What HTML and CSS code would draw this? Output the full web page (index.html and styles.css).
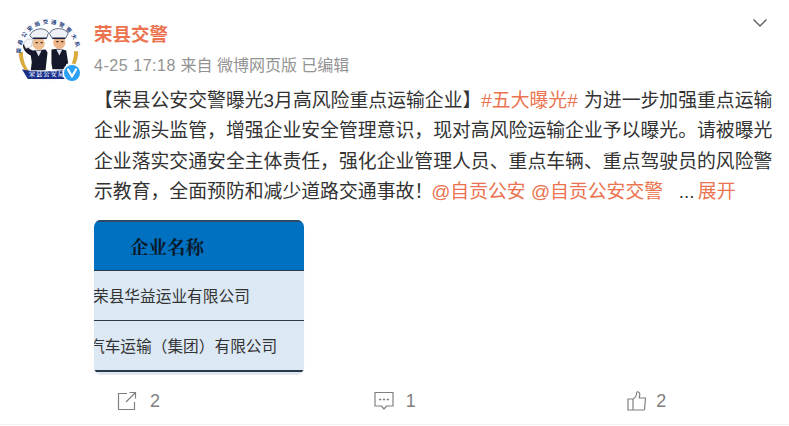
FILE: index.html
```html
<!DOCTYPE html>
<html lang="zh">
<head>
<meta charset="utf-8">
<title>荣县交警</title>
<link rel="stylesheet" href="styles.css">
</head>
<body>
<article class="card">
  <header class="head">
    <div class="avatar">
      <svg class="avatar-art" viewBox="0 0 66 66" aria-hidden="true">
        <circle cx="33" cy="34" r="31.500" fill="#eef0f6"/>
        <circle cx="33" cy="34" r="30.500" fill="#fff"/>
        <path d="M3 37c0 8 3 15 8 20l2-1.500c-4-5-6-12-6-19zM63 36c0 8-3 15-8 20l-2-1.500c4-5 6-12 6-19z" fill="#d9a93a"/>
        <defs><path id="ring" d="M5 38a28 28 0 0 1 56-4"/></defs>
        <text class="ring-text"><textPath href="#ring" textLength="86">荣县公安局交通警察大队</textPath></text>
        <path d="M6 54c12 3 30 3 46 0v10H12z" fill="#1c2f86"/>
        <text class="banner-text" x="13" y="61" textLength="36">荣县公安局</text>
        <path d="M17 35c-3-1-6-3-7-7l-3 1c0 5 3 9 8 11l1 7-1 8h15l1-9 1-9-2-3z" fill="#15182a"/>
        <path d="M36 34l8-1 7 2 2 13-2 1-1 5H37l-1-6z" fill="#15182a"/>
        <path d="M20 35l3 6 3-6zM41 34l3 6 3-6z" fill="#dfe4ee"/>
        <ellipse cx="23" cy="28" rx="6.200" ry="6.500" fill="#f0bd8f"/>
        <ellipse cx="44" cy="27" rx="6.200" ry="6.500" fill="#eeb588"/>
        <path d="M14 20c2-7 15-10 19-3l-2 6H17zM34 18c2-7 16-7 19 0l-3 5H37z" fill="#eef1f6" stroke="#39466b" stroke-width=".8"/>
        <path d="M17 22.500h14M37 22.500h13" stroke="#1a2240" stroke-width="1.500"/>
        <path d="M8 29c0-4 4-7 9-5l-1 7-6 2z" fill="#f3f5f8" stroke="#9aa5b5" stroke-width=".5"/>
        <path d="M20 27h2M25 27h2M41 26h2M46 26h2" stroke="#222" stroke-width="1.200"/>
      </svg>
      <svg class="badge" viewBox="0 0 20 20" aria-hidden="true">
        <circle cx="10" cy="10" r="9.500" fill="#fff"/>
        <circle cx="10" cy="10" r="8" fill="#2aa1f2"/>
        <path d="M6 6.500l4 7 4-7" fill="none" stroke="#fff" stroke-width="2.200" stroke-linecap="round" stroke-linejoin="round"/>
      </svg>
    </div>
    <div class="meta">
      <h1 class="name">荣县交警</h1>
      <p class="sub"><span class="time">4-25 17:18</span> 来自 微博网页版 已编辑</p>
    </div>
    <svg class="chevron" viewBox="0 0 16 10" aria-hidden="true">
      <path d="M1.500 1.500L8 8l6.500-6.500" fill="none" stroke="#666" stroke-width="1.500"/>
    </svg>
  </header>

  <p class="text">【荣县公安交警曝光3月高风险重点运输企业】<a class="link tag">#五大曝光#</a> 为进一步加强重点运输企业源头监管，增强企业安全管理意识，现对高风险运输企业予以曝光。请被曝光企业落实交通安全主体责任，强化企业管理人员、重点车辆、重点驾驶员的风险警示教育，全面预防和减少道路交通事故！<a class="link mention">@自贡公安</a> <a class="link">@自贡公安交警</a> &nbsp; ... <a class="link more">展开</a></p>

  <div class="photo">
    <div class="cell cell-head">企业名称</div>
    <div class="cell cell-row">荣县华益运业有限公司</div>
    <div class="cell cell-row cell-shift">汽车运输（集团）有限公司</div>
  </div>

  <footer class="actions">
    <div class="action">
      <svg class="icon" viewBox="0 0 20 20" aria-hidden="true">
        <path d="M10 2.500H1.500v16h16V11M12.500 1.500h6v6M18 2l-9 9" fill="none" stroke="#808080" stroke-width="1.200"/>
      </svg>
      <span>2</span>
    </div>
    <div class="action">
      <svg class="icon" viewBox="0 0 20 20" aria-hidden="true">
        <path d="M1 1.500h18v13.500h-6.500L10 18l-2.500-3H1z" fill="none" stroke="#808080" stroke-width="1.200"/>
        <path d="M5 8.500h2.200M8.900 8.500h2.200M12.800 8.500H15" stroke="#808080" stroke-width="1.400"/>
      </svg>
      <span>1</span>
    </div>
    <div class="action">
      <svg class="icon" viewBox="0 0 20 20" aria-hidden="true">
        <path d="M1 8h5v11H1zM6 8c2-1 3.500-3 3.700-6.500C10 0 13 .8 12.800 3.500L12.300 7h6.200l-1 11.500-.6.500H6" fill="none" stroke="#808080" stroke-width="1.200"/>
      </svg>
      <span>2</span>
    </div>
  </footer>
</article>
</body>
</html>
```
FILE: styles.css
```css
* { box-sizing: border-box; }
html, body { margin: 0; background: #fff; }
body {
  width: 789px;
  height: 426px;
  overflow: hidden;
  font-family: "Liberation Sans", "Noto Sans CJK SC", sans-serif;
  color: #333;
}
.card {
  height: 425px;
  border-bottom: 1px solid #f2f2f2;
  padding: 16px 16px 0;
  display: flex;
  flex-direction: column;
}
.head { display: flex; align-items: flex-start; gap: 13px; }
.avatar { position: relative; width: 65px; height: 65px; flex: none; }
.avatar-art { width: 65px; height: 65px; display: block; }
.ring-text {
  font-family: "Noto Sans CJK SC", sans-serif;
  font-size: 5.500px;
  font-weight: 700;
  fill: #24407f;
}
.banner-text {
  font-family: "Noto Serif CJK SC", "Noto Sans CJK SC", serif;
  font-size: 6.500px;
  font-weight: 700;
  fill: #dfe6ff;
}
.badge { position: absolute; right: -1px; bottom: -2px; width: 20px; height: 20px; }
.meta { flex: 1; padding-top: 5px; }
.name {
  margin: 0;
  font-size: 18.500px;
  line-height: 27px;
  font-weight: 700;
  color: #eb7350;
}
.sub { margin: 7px 0 0; font-size: 16px; line-height: 22px; color: #939393; }
.time { letter-spacing: .55px; }
.chevron { width: 16px; height: 10px; margin: 2px 5px 0 0; flex: none; }
.text {
  margin: 5px 0 0;
  padding: 0 0 0 78px;
  font-size: 18.850px;
  line-height: 30.400px;
  color: #333;
}
.link { color: #eb7350; }
.tag { margin-right: 1px; }
.mention { margin-left: -2px; }
.more { margin-left: -2px; }
.photo {
  margin: 12px 0 0 78px;
  width: 210px;
  height: 154px;
  border-radius: 7px;
  overflow: hidden;
  background: #dce9f5;
  color: #333;
  font-family: "Noto Sans CJK SC", sans-serif;
  font-size: 15.700px;
  box-shadow: 0 1px 1px #e8e8e8;
}
.cell {
  display: flex;
  align-items: center;
  white-space: nowrap;
  border-bottom: 1px solid #2b3a4a;
}
.cell-head {
  height: 51px;
  padding-left: 36px;
  background: #0070c0;
  color: #0a1a2a;
  border-top: 2px solid #2a4a66;
  font-family: "Noto Serif CJK SC", "Noto Sans CJK SC", serif;
  font-size: 18.500px;
  font-weight: 700;
}
.cell-row { height: 50px; padding-left: 0; overflow: hidden; text-indent: -1px; }
.cell-shift { text-indent: -5px; border-bottom-width: 2px; height: 51px; }
.actions {
  display: grid;
  grid-template-columns: repeat(3, 1fr);
  margin-top: 17px;
  padding-left: 101px;
}
.action {
  display: flex;
  align-items: center;
  gap: 13px;
  font-size: 18px;
  line-height: 20px;
  color: #808080;
}
.action:nth-child(2) { padding-left: 38px; gap: 12px; }
.action:nth-child(3) { padding-left: 73px; gap: 9px; }
.icon { width: 20px; height: 20px; flex: none; }
```
